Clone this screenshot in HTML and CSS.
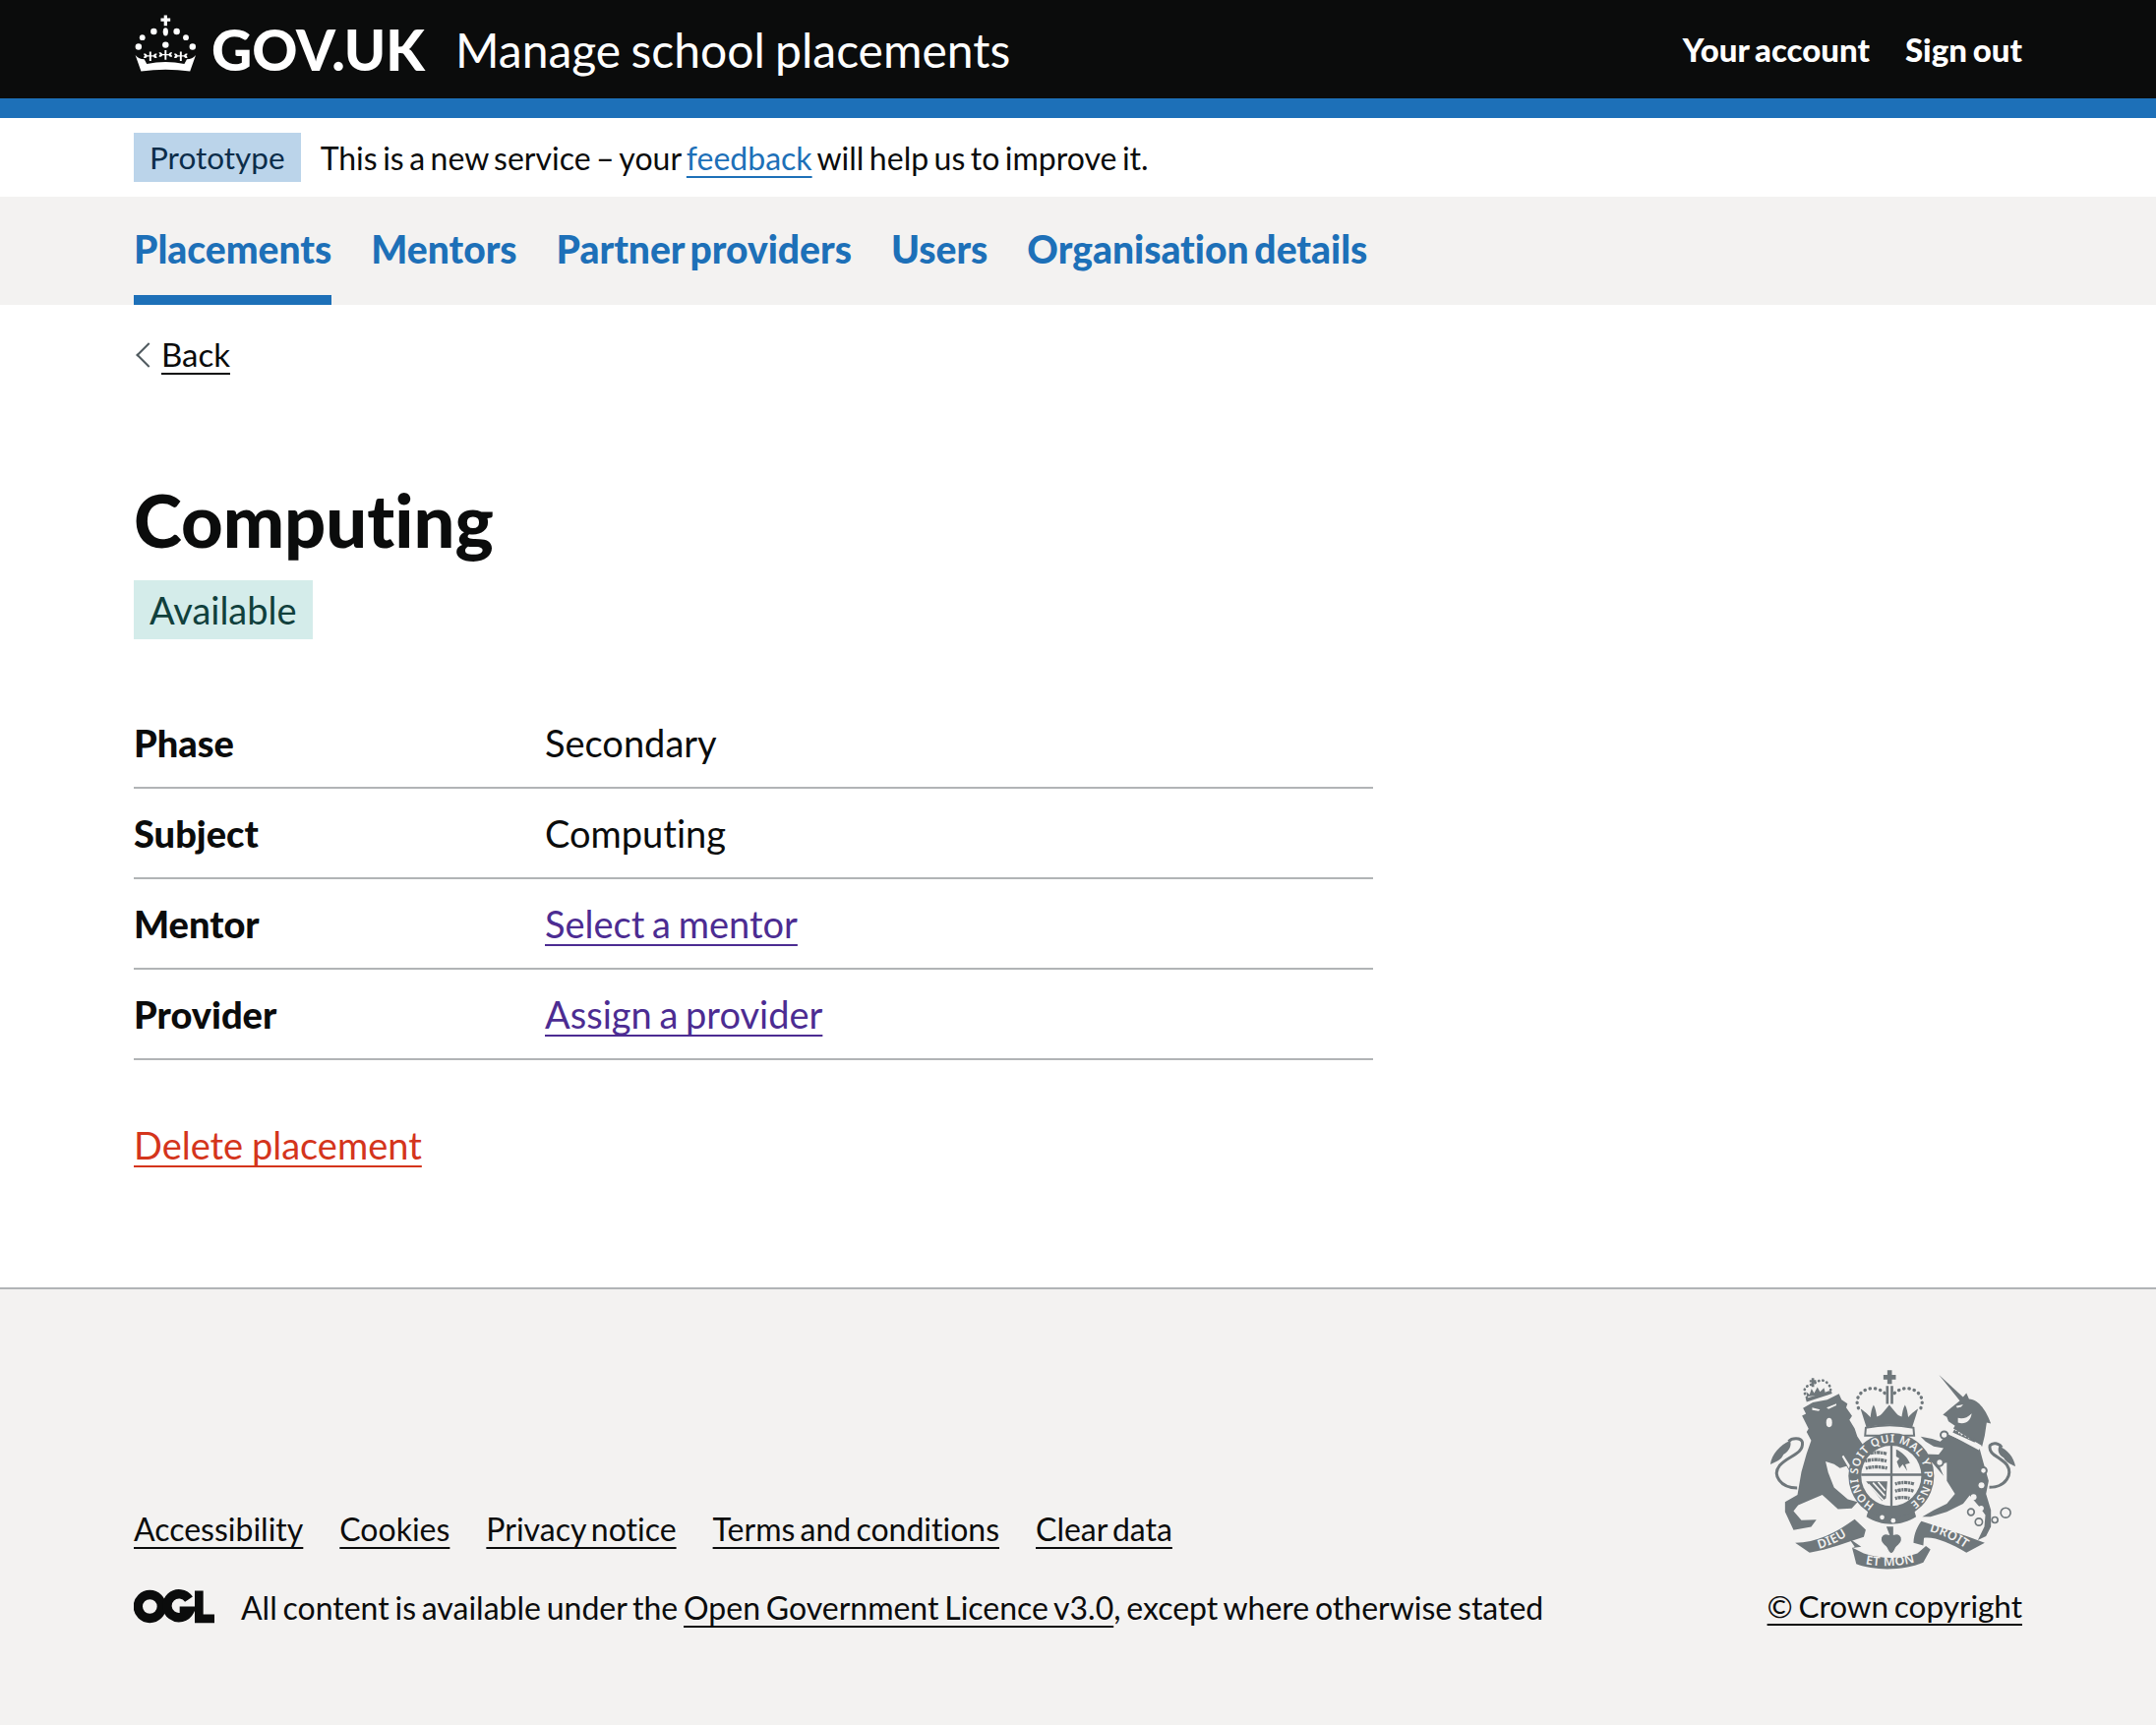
FILE: index.html
```html
<!DOCTYPE html>
<html lang="en">
<head>
<meta charset="utf-8">
<title>Computing - Manage school placements</title>
<link rel="stylesheet" href="styles.css">
</head>
<body>
<header class="header">
  <div class="container header-inner">
    <a class="logo" href="#">
      <svg class="crown" viewBox="45 38 198 184" aria-hidden="true">
        <defs>
          <path id="fleur" d="M-3 -20h6v12h7c2-5 7-7 11-5-1 3-2 5-5 6 3 1 4 3 5 7-4 2-9 0-11-4H3v14h-6v-14h-7c-2 4-7 6-11 4 1-4 2-6 5-7-3-1-4-3-5-6 4-2 9 0 11 5h7z"/>
        </defs>
        <g fill="#fff">
          <path d="M140 42h10v9h10v10h-10v14h-10V61h-10V51h10z"/>
          <ellipse cx="145" cy="94" rx="8" ry="13"/>
          <circle cx="108" cy="93" r="10"/><circle cx="180" cy="93" r="10"/>
          <circle cx="72" cy="112" r="9"/><circle cx="209" cy="112" r="9"/>
          <circle cx="60" cy="141" r="10"/><circle cx="230" cy="141" r="10"/>
          <circle cx="145" cy="135" r="10"/>
          <use href="#fleur" x="97" y="176"/>
          <use href="#fleur" x="145" y="172"/>
          <use href="#fleur" x="193" y="176"/>
          <path d="M50 167c8 9 16 13 28 13l8 15q59-13 118 0l8-15c12 0 20-4 28-13l-18 51q-77-10-154 0z"/>
        </g>
      </svg>
      <span class="logo-text">GOV.UK</span>
    </a>
    <a class="service-name" href="#">Manage school placements</a>
    <nav class="account">
      <a href="#">Your account</a>
      <a href="#">Sign out</a>
    </nav>
  </div>
</header>

<div class="container phase">
  <strong class="tag tag-blue">Prototype</strong>
  <span>This is a new service – your <a class="link" href="#">feedback</a> will help us to improve it.</span>
</div>

<nav class="primary">
  <ul class="container primary-list">
    <li class="current"><a href="#">Placements</a></li>
    <li><a href="#">Mentors</a></li>
    <li><a href="#">Partner providers</a></li>
    <li><a href="#">Users</a></li>
    <li><a href="#">Organisation details</a></li>
  </ul>
</nav>

<main class="container main">
  <a class="back" href="#">Back</a>
  <h1 class="title">Computing</h1>
  <strong class="tag tag-green">Available</strong>
  <dl class="summary">
    <div class="row"><dt>Phase</dt><dd>Secondary</dd></div>
    <div class="row"><dt>Subject</dt><dd>Computing</dd></div>
    <div class="row"><dt>Mentor</dt><dd><a class="visited" href="#">Select a mentor</a></dd></div>
    <div class="row"><dt>Provider</dt><dd><a class="visited" href="#">Assign a provider</a></dd></div>
  </dl>
  <a class="danger" href="#">Delete placement</a>
</main>

<footer class="footer">
  <div class="container footer-inner">
    <div class="meta">
      <ul class="footer-links">
        <li><a href="#">Accessibility</a></li>
        <li><a href="#">Cookies</a></li>
        <li><a href="#">Privacy notice</a></li>
        <li><a href="#">Terms and conditions</a></li>
        <li><a href="#">Clear data</a></li>
      </ul>
      <div class="licence">
        <svg class="ogl" viewBox="48 70 246 104" aria-hidden="true">
          <g fill="none" stroke="#0b0c0c" stroke-width="28">
            <circle cx="97" cy="122" r="36"/>
            <path d="M216 100a36 36 0 1 0 2 36h-30"/>
          </g>
          <path fill="#0b0c0c" d="M234 74h26v72h34v26h-60z"/>
        </svg>
        <span>All content is available under the <a href="#">Open Government Licence v3.0</a>, except where otherwise stated</span>
      </div>
    </div>
    <div class="copyright">
      <svg class="crest" viewBox="55 55 760 620" aria-hidden="true">
        <defs>
          <path id="garter" d="M379 473A102 102 0 1 1 481 473"/>
          <path id="rib-l" d="M195 612Q250 600 308 560"/>
          <path id="rib-m" d="M340 652Q425 672 514 646"/>
          <path id="rib-r" d="M538 553Q600 566 664 612"/>
        </defs>
        <g fill="#6f777b">
          <!-- lion crown -->
          <g fill="none" stroke="#6f777b" stroke-width="8" stroke-dasharray="1 12" stroke-linecap="round"><path d="M172 146Q150 112 192 104Q222 80 240 108Q250 122 238 132"/></g>
          <path d="M186 86h8v6h6v7h-6v14h-8V99h-6v-7h6z"/>
          <path d="M168 148l78-24 3 9-78 26z"/>
          <path d="M172 142l-2-14 10 8 6-18 8 14 10-18 8 14 12-12 4 14 12-6-2 12z"/>
          <!-- lion -->
          <path d="M160 178l30-18 44-8 36-18 8 18 18 12-4 12 18 26-8 12 16 26 8 24 20 30-25 30 30 66-2 27-28-16-28-46-20 6-18-12-26-8 8 34 18 46 42 36 30 8-18 20-42 2-48-44-32 14-42 18-14 18 24 28 46-2-16 22-54 10-26-56 0-30 38-22 12-70 16-56 14-40-14-26 6-10-20-40 12-6z"/>
          <g fill="#f3f2f1">
            <path d="M188 176l24 6-4 5-20-3zM232 176l30-12 0 5-24 12z"/>
            <ellipse cx="240" cy="222" rx="9" ry="14"/>
            <path d="M284 322l44 70 5 28-8-4-4-18-42-72z"/>
          </g>
          <path d="M142 422C90 422 66 382 88 354c28-32 74-34 70-72-4-14-32-14-42-2" fill="none" stroke="#6f777b" stroke-width="9"/>
          <path d="M60 350c4-30 30-60 60-72 6 12 0 30-20 42-6 16-22 22-40 30z"/>
          <!-- unicorn -->
          <path d="M576 76L652 146 642 158z"/>
          <path d="M640 155L660 132 668 150C700 152 722 190 735 225L722 222 716 262 708 295 620 240 625 232 605 218 600 205 588 198 612 178z"/>
          <path d="M604 258L700 300 712 345 728 400 720 440 735 490 735 540 720 570 695 582 715 540 718 505 700 480 670 445 650 470 600 495 550 510 525 510 560 490 600 470 625 440 600 400 600 345 575 350 590 385 560 350 530 318 575 320 590 300 560 295 535 280 520 265 555 272 580 280z"/>
          <path d="M634 208c14 4 28 0 42-14-2 22-20 36-42 28z" fill="#f3f2f1"/>
          <path d="M628 172l22-6-6 8-12 3z" fill="#f3f2f1"/>
          <path d="M730 420C782 420 802 380 784 352c-20-26-58-30-52-60 8-10 28-8 36 6" fill="none" stroke="#6f777b" stroke-width="9"/>
          <path d="M810 356c-4-28-26-52-50-62-6 12-2 26 14 36 8 14 20 20 36 26z"/>
          <path d="M614 238l92 54-8 14-94-50z" fill="#f3f2f1"/>
          <path d="M618 252l6-10 4 6 6-2 2 10 6-2 2 8 8-6 4 10 8-4 2 10 8-6 4 8 8-6 6 12-8 2z"/>
          <g fill="#f3f2f1" stroke="#6f777b" stroke-width="6">
            <circle cx="592" cy="260" r="11"/><circle cx="578" cy="344" r="11"/><circle cx="712" cy="369" r="10"/>
          </g>
          <g fill="none" stroke="#6f777b" stroke-width="5">
            <circle cx="674" cy="496" r="10"/><circle cx="698" cy="526" r="11"/><circle cx="747" cy="520" r="9"/><circle cx="780" cy="498" r="15"/>
          </g>
          <g fill="#f3f2f1"><circle cx="706" cy="414" r="9"/><circle cx="682" cy="450" r="9"/><circle cx="705" cy="484" r="8"/></g>
          <!-- royal crown -->
          <path d="M418 62h14v14h12v14h-12v14h-14V90h-12V76h12z"/>
          <path d="M414 110h8v55h-8zM428 110h8v55h-8z"/>
          <g fill="none" stroke="#6f777b" stroke-width="10" stroke-dasharray="1 15" stroke-linecap="round">
            <path d="M410 132C375 100 320 125 326 165c2 12 6 18 10 22"/>
            <path d="M440 132C475 100 530 125 524 165c-2 12-6 18-10 22"/>
          </g>
          <path d="M336 180c10 6 24 18 30 26 2-14 4-28 10-38 6 10 8 24 10 36 8-2 14-6 18-12l20-24 20 24c4 6 10 10 18 12 2-12 4-26 10-36 6 10 8 24 10 38 6-8 20-20 30-26l-18 56q-72-14-140 0z"/>
          <path d="M352 238q73-16 146 0l2 24H350z" fill="#f3f2f1" stroke="#6f777b" stroke-width="6"/>
          <!-- shield garter -->
          <circle cx="430" cy="385" r="131"/>
          <circle cx="430" cy="385" r="92" fill="#f3f2f1"/>
          <path d="M427 288h7v194h-7zM338 378h186v7H338z"/>
          <g fill="none" stroke="#6f777b" stroke-width="10" stroke-dasharray="6 2 10 2">
            <path d="M358 318c18-6 40-6 58 0M350 340c20-6 44-6 66 0M352 362c20-6 44-6 66 0"/>
            <path d="M442 410c18-6 40-6 58 0M442 432c18-6 40-6 56 0M442 454c14-4 30-4 44 0"/>
          </g>
          <path d="M445 304c18 8 34 24 42 42l-14 4 6 20-14-20-10 12-8-20 8-10-10-6zM352 400l50 62 12-8 4-52H352z"/>
          <path d="M360 410l46 50M374 406l36 40M390 404l22 26" stroke="#f3f2f1" stroke-width="5" fill="none"/>
          <!-- ribbon -->
          <path d="M136 590c64 0 124-30 182-72l34 32-6 22c-56 18-106 38-166 48z"/>
          <path d="M300 576l38 26-26 4 6-4z"/>
          <path d="M310 604l36 18c54 18 112 18 164 0l26-22 14 10-22 40c-60 26-150 26-205 5z"/>
          <path d="M498 590c2-30 12-50 24-66 66 21 128 41 194 66l-56 30c-50-30-100-50-130-45l-2 23z"/>
          <path d="M412 538h26v26c14-4 26 2 24 18-2 14-12 14-18 24-4 8-4 14-14 18-10-4-10-10-14-18-6-10-16-10-18-24-2-16 10-22 24-18z" stroke="#f3f2f1" stroke-width="4"/>
          <path d="M360 490c40 30 100 30 140 0l6 20c-46 30-106 30-152 0z"/>
          <circle cx="402" cy="512" r="7" fill="#f3f2f1"/><circle cx="436" cy="522" r="7" fill="#f3f2f1"/>
        </g>
        <g class="crest-text" fill="#f3f2f1">
          <text class="garter-text"><textPath href="#garter" textLength="525" lengthAdjust="spacing">HONI SOIT QUI MAL Y PENSE</textPath></text>
          <text class="ribbon-text"><textPath href="#rib-l" startOffset="50%" text-anchor="middle">DIEU</textPath></text>
          <text class="ribbon-text"><textPath href="#rib-m" startOffset="50%" text-anchor="middle">ET MON</textPath></text>
          <text class="ribbon-text"><textPath href="#rib-r" startOffset="50%" text-anchor="middle">DROIT</textPath></text>
        </g>
      </svg>
      <a class="copyright-link" href="#">© Crown copyright</a>
    </div>
  </div>
</footer>
</body>
</html>
```
FILE: styles.css
```css
* { box-sizing: border-box; }
html, body { margin: 0; padding: 0; }
body {
  font-family: Lato, "Noto Sans", sans-serif;
  font-size: 33px;
  font-variant-ligatures: none;
  color: #0b0c0c;
  background: #fff;
  min-height: 1754px;
  display: flex;
  flex-direction: column;
}
a {
  color: inherit;
  text-decoration-thickness: 2px;
  text-underline-offset: 6px;
  text-decoration-skip-ink: none;
}
ul { list-style: none; margin: 0; padding: 0; }
.container { width: 1920px; margin-left: 136px; }

.header { background: #0b0c0c; border-bottom: 20px solid #1d70b8; height: 120px; color: #fff; }
.header-inner { display: flex; align-items: center; height: 100px; }
.header a { color: #fff; text-decoration: none; }
.logo { display: flex; align-items: center; gap: 15px; margin-right: 31px; }
.crown { width: 64px; height: 60px; margin-bottom: 12px; }
.logo-text { font-weight: 900; font-size: 57px; line-height: 96px; }
.service-name { font-size: 48px; line-height: 97px; word-spacing: -2px; }
.account { margin-left: auto; display: flex; gap: 36px; font-size: 33px; font-weight: 900; line-height: 96px; word-spacing: -2px; }

.phase { display: flex; align-items: center; gap: 20px; height: 80px; font-size: 32px; word-spacing: -2.7px; }
.tag { font-weight: 400; display: inline-block; padding: 0 16px; }
.tag-blue { background: #bbd4ea; color: #0c2d4a; height: 50px; line-height: 50px; font-size: 31.5px; }
.tag-green { background: #d4ecea; color: #10403c; height: 60px; line-height: 60px; font-size: 38px; }
.link { color: #1d70b8; }

.primary { background: #f3f2f1; height: 110px; }
.primary-list { display: flex; gap: 40px; height: 110px; }
.primary-list li { display: flex; align-items: center; border-bottom: 10px solid transparent; padding-top: 6px; }
.primary-list li.current { border-bottom-color: #1d70b8; }
.primary-list a { color: #1d70b8; font-weight: 900; font-size: 39px; text-decoration: none; word-spacing: -3.5px; }

.main { padding-top: 30px; flex: 1; display: flex; flex-direction: column; align-items: flex-start; }
.back { font-size: 33px; line-height: 40px; padding-left: 28px; position: relative; }
.back::before {
  content: ""; position: absolute; left: 6px; top: 12px; width: 16px; height: 16px;
  border-left: 2px solid #505a5f; border-bottom: 2px solid #505a5f; transform: rotate(45deg);
}
.title { font-size: 74px; font-weight: 900; margin: 104px 0 16px; line-height: 90px; }
.summary { width: 1260px; margin: 60px 0 0; }
.row { display: flex; height: 92px; align-items: center; border-bottom: 2px solid #b1b4b6; font-size: 38px; word-spacing: -2px; }
.row dt { width: 418px; font-weight: 900; }
.row dd { margin: 0; }
.visited { color: #4c2c92; }
.danger { color: #d4351c; font-size: 38px; margin-top: 63px; word-spacing: -1px; }

.footer { background: #f3f2f1; border-top: 2px solid #b1b4b6; height: 445px; margin-top: auto; font-size: 32px; word-spacing: -2.4px; }
.footer-inner { display: flex; justify-content: space-between; padding-top: 80px; }
.meta { align-self: flex-start; padding-top: 144px; }
.footer-links { display: flex; gap: 37px; margin-bottom: 41px; word-spacing: -3px; }
.licence { display: flex; align-items: center; gap: 27px; }
.ogl { width: 82px; height: 35px; margin-bottom: 3px; }
.copyright { display: flex; flex-direction: column; align-items: center; gap: 17px; }
.copyright-link { font-size: 31.5px; }
.crest { width: 253px; height: 206px; margin-right: 3px; }
.crest-text { font-family: "Noto Sans", sans-serif; font-weight: 600; word-spacing: 0; }
.garter-text { font-size: 34px; }
.ribbon-text { font-size: 38px; letter-spacing: 1px; }
```
